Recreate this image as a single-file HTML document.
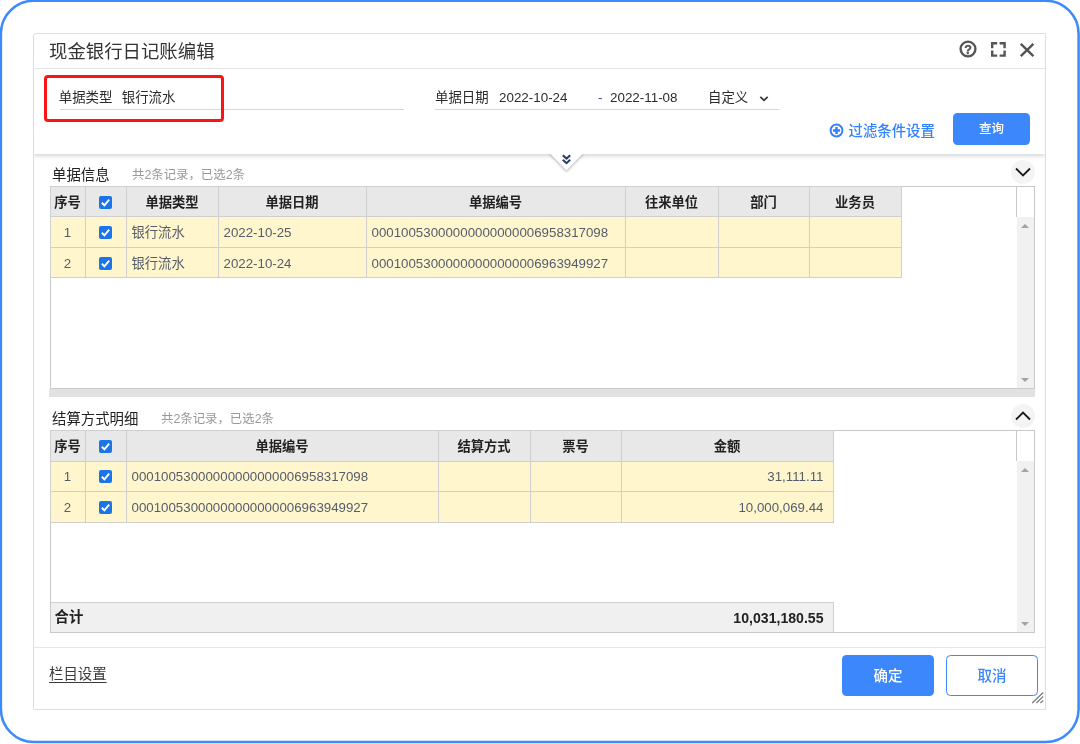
<!DOCTYPE html>
<html lang="zh-CN">
<head>
<meta charset="utf-8">
<title>现金银行日记账编辑</title>
<style>
*{box-sizing:border-box;margin:0;padding:0}
html,body{width:1080px;height:744px;overflow:hidden;background:#fff}
body{font-family:"Liberation Sans","Noto Sans CJK SC",sans-serif;font-size:13px;color:#333;position:relative}
.abs{position:absolute}
.dialog{position:absolute;left:33.3px;top:33.3px;width:1013px;height:676.5px;border:1px solid #dedede;border-radius:3px 0 0 0;background:#fff}
.title{position:absolute;left:49px;top:39px;font-size:18.4px;line-height:26px;color:#333;white-space:nowrap}
.tsep{position:absolute;left:34px;top:68px;width:1011px;height:1px;background:#e4e4e4}
.filter{position:absolute;left:34px;top:69px;width:1011px;height:85px;background:#fff;box-shadow:0 2px 4px rgba(60,70,90,.22);clip-path:inset(0 0 -12px 0)}
.redbox{position:absolute;left:44px;top:75px;width:180px;height:47px;border:3px solid #fa1416;border-radius:4px;z-index:5}
.lbl{position:absolute;font-size:13.4px;line-height:18px;color:#2b2b2b;white-space:nowrap}
.uline{position:absolute;height:1px;background:#d6d6d6}
.link{position:absolute;color:#3382ff;white-space:nowrap}
.btn{position:absolute;border-radius:4.5px;text-align:center;white-space:nowrap}
.btn.primary{background:#3b87fb;color:#fff}
.btn.ghost{background:#fff;color:#3b87fb;border:1px solid #3b87fb}
.sect{position:absolute;font-size:14.4px;line-height:20px;color:#222;white-space:nowrap}
.cnt{position:absolute;font-size:12.4px;line-height:18px;color:#999;white-space:nowrap}
.grid{position:absolute;left:49.5px;width:985px;border:1px solid #c9c9c9;background:#fff}
table{border-collapse:collapse;position:absolute;left:-1px;top:-1px;table-layout:fixed}
td,th{border:1px solid #cfcfcf;height:30.8px;font-size:13.3px;white-space:nowrap;overflow:hidden;padding:2px 5px 0;vertical-align:middle}
th{background:#e8e8e8;font-weight:bold;color:#222;text-align:center;padding:2px 0 0;height:29.6px}
td{background:#fff6cd;color:#555d6b;text-align:left}
td.c{text-align:center;padding:2px 0 0}
td,th{line-height:18px}
td.r{text-align:right;padding-right:9px}
.t2 th{height:30.5px}
.cb{display:inline-block;width:13px;height:13px;border-radius:2px;background:#1b74e8;vertical-align:middle;position:relative;top:-1px}
.cb svg{display:block;width:13px;height:13px}
th .cb{top:-1px}
.sbar{position:absolute;right:0;width:17px;background:#f1f1f1}
.corner{position:absolute;right:0;top:0;width:18px;height:30px;background:#fff;border-left:1px solid #c9c9c9}
.arrow{position:absolute;left:4px;width:0;height:0;border-left:4.5px solid transparent;border-right:4.5px solid transparent}
.arrow.up{border-bottom:4.5px solid #a3a3a3}
.arrow.down{border-top:4.5px solid #a3a3a3}
.circ{position:absolute;width:24px;height:24px;border-radius:12px;background:#f4f4f4}
.total{position:absolute;left:0;bottom:0;width:783px;height:30px;background:#f0f0f0;border-top:1px solid #cfcfcf;border-right:1px solid #cfcfcf;font-weight:bold;font-size:14.4px;color:#222}
</style>
</head>
<body>
<div id="root" style="position:absolute;left:0;top:0;width:1080px;height:744px;will-change:transform">
<svg class="abs" style="left:0;top:0" width="1080" height="744" viewBox="0 0 1080 744"><rect x="0.9" y="0.7" width="1077.7" height="741.3" rx="33" ry="33" fill="#fff" stroke="#3c8afc" stroke-width="2.5"/></svg>
<div class="dialog"></div>
<div class="title">现金银行日记账编辑</div>

<!-- title icons -->
<svg class="abs" style="left:957.7px;top:39.4px" width="20" height="20" viewBox="0 0 20 20"><circle cx="10" cy="10" r="7.4" fill="none" stroke="#555" stroke-width="2.4"/><text x="10" y="14.5" text-anchor="middle" font-family="Liberation Sans, sans-serif" font-weight="bold" font-size="12.5" fill="#555" stroke="#555" stroke-width="0.4">?</text></svg>
<svg class="abs" style="left:990px;top:41px" width="17" height="17" viewBox="0 0 17 17"><path d="M2.2 7.2V2.2H7.2M9.6 2.2H14.6V7.2M14.6 9.6V14.6H9.6M7.2 14.6H2.2V9.6" fill="none" stroke="#555" stroke-width="2.4"/></svg>
<svg class="abs" style="left:1019px;top:42px" width="16" height="16" viewBox="0 0 16 16"><path d="M1.8 1.8L14.4 14.2M14.4 1.8L1.8 14.2" fill="none" stroke="#555" stroke-width="2.4"/></svg>

<div class="tsep"></div>
<div class="filter"></div>

<!-- notch -->
<svg class="abs" style="left:546px;top:154px" width="42" height="22" viewBox="0 0 42 22">
<defs><filter id="sh" x="-20%" y="-20%" width="140%" height="160%"><feGaussianBlur stdDeviation="1.2"/></filter></defs>
<path d="M3 0L20.5 18L38 0Z" fill="rgba(60,70,90,.35)" filter="url(#sh)"/>
<path d="M3.5 -1L20.5 16.5L37.5 -1Z" fill="#fff"/>
<path d="M16.8 1.2L20.5 4.6L24.2 1.2M16.8 5.8L20.5 9.2L24.2 5.8" fill="none" stroke="#2b3b63" stroke-width="2"/>
</svg>

<div class="redbox"></div>
<div class="lbl" style="left:58.8px;top:88.8px">单据类型</div>
<div class="lbl" style="left:121.8px;top:88.8px">银行流水</div>
<div class="uline" style="left:60px;top:109px;width:344px"></div>

<div class="lbl" style="left:435px;top:88.8px">单据日期</div>
<div class="lbl" style="left:499px;top:88.8px">2022-10-24</div>
<div class="lbl" style="left:598px;top:88.8px;color:#3a4a78">-</div>
<div class="lbl" style="left:610px;top:88.8px">2022-11-08</div>
<div class="lbl" style="left:708px;top:88.8px">自定义</div>
<svg class="abs" style="left:758px;top:94px" width="12" height="10" viewBox="0 0 12 10"><path d="M2.3 2.8L6 6.3L9.7 2.8" fill="none" stroke="#333" stroke-width="1.7"/></svg>
<div class="uline" style="left:435px;top:109px;width:344px"></div>

<!-- filter link -->
<svg class="abs" style="left:828.7px;top:123.2px" width="15" height="15" viewBox="0 0 15 15"><circle cx="7.5" cy="7.5" r="5.9" fill="none" stroke="#3382ff" stroke-width="2"/><path d="M3.9 7.5H11.1M7.5 3.9V11.1" stroke="#3382ff" stroke-width="2.5" fill="none"/></svg>
<div class="link" style="left:848.5px;top:120.8px;font-size:14.4px;line-height:20px;font-weight:500">过滤条件设置</div>
<div class="btn primary" style="left:953px;top:113px;width:77px;height:32.4px;line-height:33.4px;font-size:12.5px;font-weight:500">查询</div>

<!-- section 1 -->
<div class="sect" style="left:52px;top:165px">单据信息</div>
<div class="cnt" style="left:132px;top:166px">共2条记录，已选2条</div>
<div class="circ" style="left:1011px;top:160px"></div>
<svg class="abs" style="left:1014px;top:165px" width="18" height="14" viewBox="0 0 18 14"><path d="M2 3.5L9 10.5L16 3.5" fill="none" stroke="#1a1a1a" stroke-width="1.8"/></svg>

<div class="grid" style="top:186.3px;height:203px">
<table style="width:851px">
<colgroup><col style="width:35px"><col style="width:41px"><col style="width:92px"><col style="width:148px"><col style="width:259px"><col style="width:93px"><col style="width:91px"><col style="width:92px"></colgroup>
<tr><th>序号</th><th><span class="cb"><svg viewBox="0 0 13 13"><path d="M2.8 6.8L5.4 9.3L10.2 3.6" fill="none" stroke="#fff" stroke-width="1.9"/></svg></span></th><th>单据类型</th><th>单据日期</th><th>单据编号</th><th>往来单位</th><th>部门</th><th>业务员</th></tr>
<tr><td class="c">1</td><td class="c"><span class="cb"><svg viewBox="0 0 13 13"><path d="M2.8 6.8L5.4 9.3L10.2 3.6" fill="none" stroke="#fff" stroke-width="1.9"/></svg></span></td><td>银行流水</td><td>2022-10-25</td><td>00010053000000000000006958317098</td><td></td><td></td><td></td></tr>
<tr><td class="c">2</td><td class="c"><span class="cb"><svg viewBox="0 0 13 13"><path d="M2.8 6.8L5.4 9.3L10.2 3.6" fill="none" stroke="#fff" stroke-width="1.9"/></svg></span></td><td>银行流水</td><td>2022-10-24</td><td>00010053000000000000006963949927</td><td></td><td></td><td></td></tr>
</table>
<div class="corner"></div>
<div class="sbar" style="top:30px;bottom:0"><div class="arrow up" style="top:7px"></div><div class="arrow down" style="bottom:6px"></div></div>
</div>
<div class="abs" style="left:49px;top:389px;width:986px;height:8px;background:#e2e2e2"></div>

<!-- section 2 -->
<div class="sect" style="left:52px;top:409px">结算方式明细</div>
<div class="cnt" style="left:161px;top:410px">共2条记录，已选2条</div>
<div class="circ" style="left:1011px;top:404px"></div>
<svg class="abs" style="left:1014px;top:409px" width="18" height="14" viewBox="0 0 18 14"><path d="M2 10.5L9 3.5L16 10.5" fill="none" stroke="#1a1a1a" stroke-width="1.8"/></svg>

<div class="grid" style="top:430px;height:203px">
<table class="t2" style="width:783px">
<colgroup><col style="width:35px"><col style="width:41px"><col style="width:312px"><col style="width:92px"><col style="width:91px"><col style="width:212px"></colgroup>
<tr><th>序号</th><th><span class="cb"><svg viewBox="0 0 13 13"><path d="M2.8 6.8L5.4 9.3L10.2 3.6" fill="none" stroke="#fff" stroke-width="1.9"/></svg></span></th><th>单据编号</th><th>结算方式</th><th>票号</th><th>金额</th></tr>
<tr><td class="c">1</td><td class="c"><span class="cb"><svg viewBox="0 0 13 13"><path d="M2.8 6.8L5.4 9.3L10.2 3.6" fill="none" stroke="#fff" stroke-width="1.9"/></svg></span></td><td>00010053000000000000006958317098</td><td></td><td></td><td class="r">31,111.11</td></tr>
<tr><td class="c">2</td><td class="c"><span class="cb"><svg viewBox="0 0 13 13"><path d="M2.8 6.8L5.4 9.3L10.2 3.6" fill="none" stroke="#fff" stroke-width="1.9"/></svg></span></td><td>00010053000000000000006963949927</td><td></td><td></td><td class="r">10,000,069.44</td></tr>
</table>
<div class="corner"></div>
<div class="sbar" style="top:30px;bottom:0"><div class="arrow up" style="top:7px"></div><div class="arrow down" style="bottom:6px"></div></div>
<div class="total"><span class="abs" style="left:4px;top:4px;line-height:20px">合计</span><span class="abs" style="right:9px;top:4.5px;line-height:20px;font-size:14.1px">10,031,180.55</span></div>
</div>

<!-- footer -->
<div class="abs" style="left:34px;top:647px;width:1011px;height:1px;background:#e6e6e6"></div>
<div class="abs" style="left:49px;top:663.8px;font-size:14.4px;line-height:20px;color:#3a3a3a;text-decoration:underline;text-underline-offset:2.5px;text-decoration-thickness:1.3px;white-space:nowrap">栏目设置</div>
<div class="btn primary" style="left:842px;top:655px;width:92px;height:41px;line-height:42.5px;font-size:14.5px;font-weight:500">确定</div>
<div class="btn ghost" style="left:946px;top:655px;width:92px;height:41px;line-height:40.5px;font-size:14.5px;font-weight:500">取消</div>
<svg class="abs" style="left:1030px;top:690px" width="16" height="16" viewBox="0 0 16 16"><path d="M2.2 13L13.2 2.5M6.4 13L13.2 6.4M10.4 13L13.2 10.4" fill="none" stroke="#7d7d7d" stroke-width="1.3"/></svg>
</div>
</body>
</html>
